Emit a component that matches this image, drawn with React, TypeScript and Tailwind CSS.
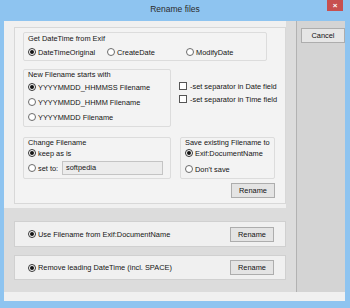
import React from 'react'

function Radio({ on }: { on?: boolean }) {
  return (
    <span
      className={
        'w-[8px] h-[8px] rounded-full border bg-white flex items-center justify-center shrink-0 ' +
        (on ? 'border-[#333333]' : 'border-[#6b6b6b]')
      }
    >
      {on && <span className="w-[4px] h-[4px] rounded-full bg-[#141414]" />}
    </span>
  )
}

function RadioRow({ label, on, className = '' }: { label: string; on?: boolean; className?: string }) {
  return (
    <div className={'flex items-center gap-[2px] h-[10px] ' + className}>
      <Radio on={on} />
      <span className="whitespace-nowrap">{label}</span>
    </div>
  )
}

function Check({ label }: { label: string }) {
  return (
    <div className="flex items-center gap-[3px] h-[10px]">
      <span className="w-[8px] h-[8px] border border-[#555555] bg-white shrink-0" />
      <span className="whitespace-nowrap">{label}</span>
    </div>
  )
}

function Button({ label, className = '' }: { label: string; className?: string }) {
  return (
    <div
      className={
        'h-[15px] w-[44px] border border-[#adadad] bg-[#e4e4e4] flex items-center justify-center text-[#111] ' +
        className
      }
    >
      {label}
    </div>
  )
}

function Group({ title, className = '', children }: { title: string; className?: string; children?: React.ReactNode }) {
  return (
    <div className={'border border-[#dcdcdc] rounded-[2px] flex flex-col ' + className}>
      <div className="h-[9px] pl-[4px] leading-[9px] whitespace-nowrap">{title}</div>
      {children}
    </div>
  )
}

export default function App() {
  return (
    <div
      className="w-[350px] h-[308px] bg-[#8ec4f0] flex flex-col text-[7.4px] leading-[9px] text-[#141414] overflow-hidden"
      style={{ fontFamily: '"Liberation Sans", Arial, sans-serif' }}
    >
      {/* title bar */}
      <div className="h-[21px] grid grid-cols-[1fr_auto_1fr] shrink-0">
        <div />
        <div className="text-[8.5px] leading-[19px] text-[#2b2b2b]">Rename files</div>
        <div className="flex justify-end pr-[7px]">
          <div className="w-[16px] h-[11px] bg-[#c75050] flex items-center justify-center text-white text-[8px] leading-none font-bold">
            ×
          </div>
        </div>
      </div>

      {/* client area */}
      <div className="ml-[4px] mr-[5px] h-[280px] bg-[#f0f0f0] flex flex-col">
        <div className="h-[271px] flex">
          {/* left */}
          <div className="w-[294px] bg-[#dcdcdc] flex flex-col">
            <div className="w-[282px] h-[187px] bg-[#f0f0f0] pl-[10px] pt-[6px]">
              <div className="w-[272px] h-[177px] border border-[#d8d8d8] bg-[#f3f3f3] flex flex-col pl-[8px] pt-[4px]">
                {/* get date time */}
                <Group title="Get DateTime from Exif" className="w-[244px] h-[29px] pt-[1px]">
                  <div className="flex mt-[4px] pl-[4px]">
                    <RadioRow label="DateTimeOriginal" on className="w-[79px]" />
                    <RadioRow label="CreateDate" className="w-[79px]" />
                    <RadioRow label="ModifyDate" />
                  </div>
                </Group>

                <div className="flex mt-[8px]">
                  <Group title="New Filename starts with" className="w-[148px] h-[58px]">
                    <div className="flex flex-col gap-[5px] mt-[3px] pl-[4px]">
                      <RadioRow label="YYYYMMDD_HHMMSS Filename" on />
                      <RadioRow label="YYYYMMDD_HHMM Filename" />
                      <RadioRow label="YYYYMMDD Filename" />
                    </div>
                  </Group>
                  <div className="flex flex-col gap-[3px] ml-[8px] mt-[12px]">
                    <Check label="-set separator in Date field" />
                    <Check label="-set separator in Time field" />
                  </div>
                </div>

                <div className="flex mt-[10px]">
                  <Group title="Change Filename" className="w-[148px] h-[42px]">
                    <div className="flex flex-col gap-[3px] mt-[1px] pl-[4px]">
                      <RadioRow label="keep as is" on />
                      <div className="flex items-center h-[14px]">
                        <RadioRow label="set to:" className="w-[34px]" />
                        <div className="w-[101px] h-[14px] border border-[#c4c4c4] bg-[#ececec] pl-[3px] leading-[11px]">
                          softpedia
                        </div>
                      </div>
                    </div>
                  </Group>
                  <Group title="Save existing Filename to" className="w-[95px] h-[42px] ml-[9px]">
                    <div className="flex flex-col gap-[6px] mt-[1px] pl-[4px]">
                      <RadioRow label="Exif:DocumentName" on />
                      <RadioRow label="Don't save" />
                    </div>
                  </Group>
                </div>

                <div className="flex mt-[4px] pl-[208px]">
                  <Button label="Rename" />
                </div>
              </div>
            </div>

            <div className="ml-[10px] mt-[13px] w-[272px] h-[26px] bg-[#f0f0f0] border border-[#d0d0d0] flex items-center justify-between pl-[13px] pr-[11px]">
              <RadioRow label="Use Filename from Exif:DocumentName" on />
              <Button label="Rename" />
            </div>
            <div className="ml-[10px] mt-[8px] w-[272px] h-[25px] bg-[#f0f0f0] border border-[#d0d0d0] flex items-center justify-between pl-[13px] pr-[11px]">
              <RadioRow label="Remove leading DateTime (incl. SPACE)" on />
              <Button label="Rename" />
            </div>
          </div>

          {/* right column */}
          <div className="flex-1 bg-[#d4d4d4] border-l border-[#b2b2b2] pl-[4px] pt-[7px]">
            <Button label="Cancel" className="w-[39px] h-[15px] bg-[#e6e6e6]" />
          </div>
        </div>
      </div>
    </div>
  )
}
